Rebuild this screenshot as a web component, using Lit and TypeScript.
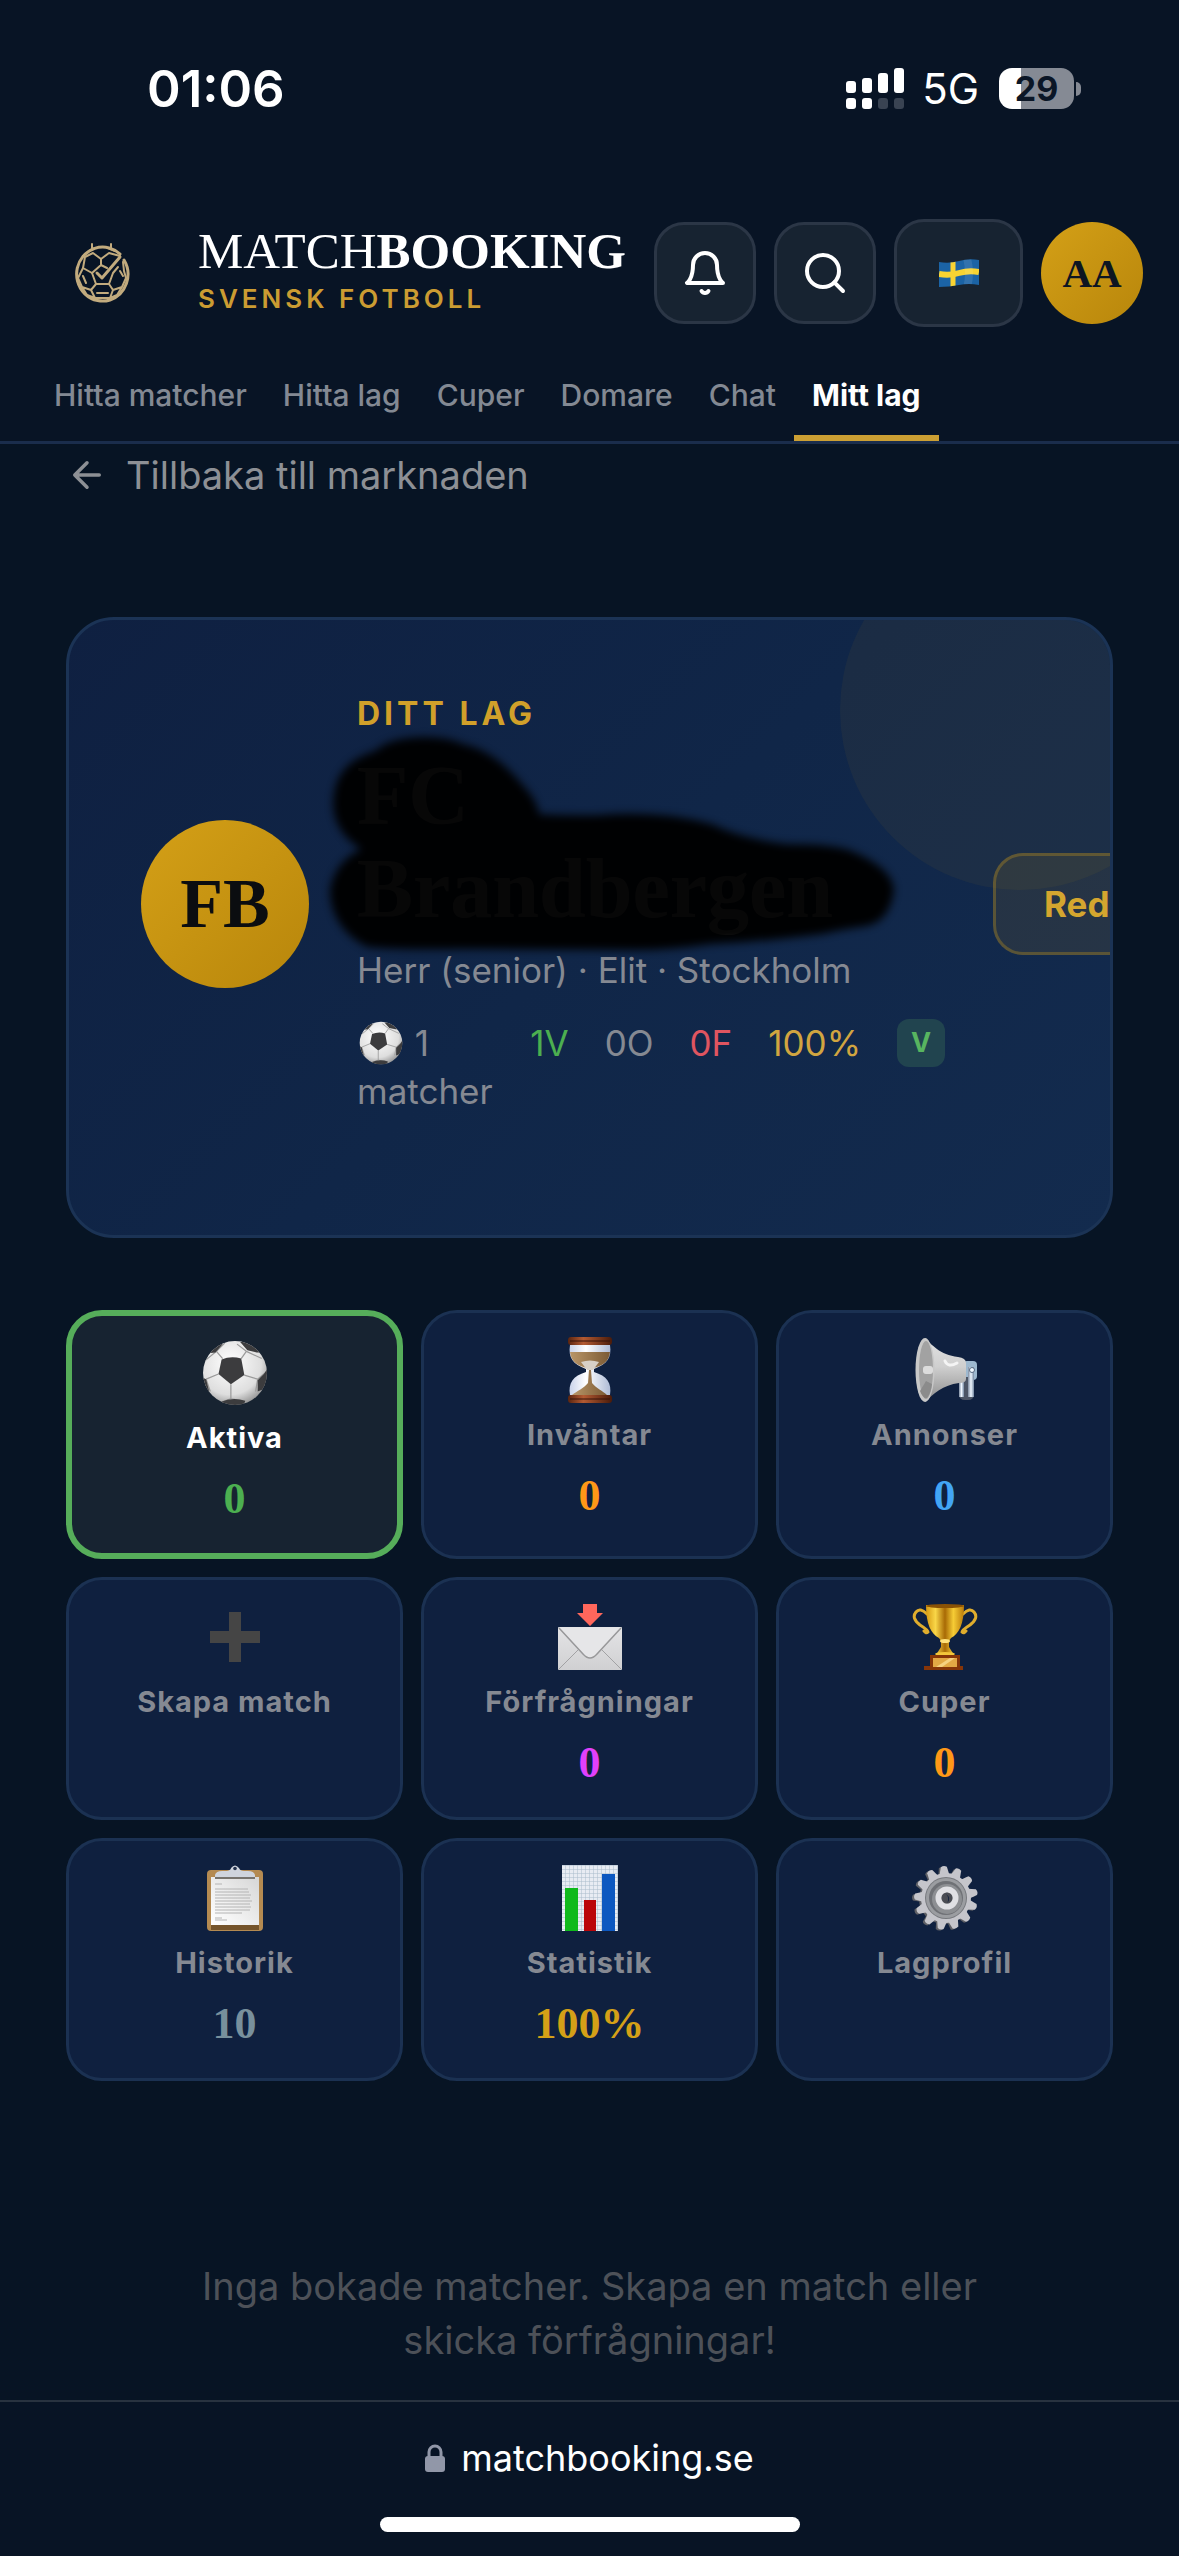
import {css, html, LitElement, nothing, svg} from 'lit';
import type {TemplateResult} from 'lit';
import {customElement, property, state} from 'lit/decorators.js';
import {classMap} from 'lit/directives/class-map.js';
import {styleMap} from 'lit/directives/style-map.js';

const ball = html`
<svg class="pic" viewBox="0 0 64 64" aria-hidden="true">
	<defs>
		<radialGradient id="leather" cx=".42" cy=".35" r=".7">
			<stop offset="0" stop-color="#fff"/>
			<stop offset=".7" stop-color="#dedede"/>
			<stop offset="1" stop-color="#8e8e8e"/>
		</radialGradient>
		<clipPath id="sphere"><circle cx="32" cy="32" r="31"/></clipPath>
	</defs>
	<circle cx="32" cy="32" r="31" fill="url(#leather)"/>
	<g clip-path="url(#sphere)">
		<g stroke="#9a9a9a" stroke-width="1.2" fill="none">
			<path d="M20 18 14 11M38 18 43 11M41 34 54 38M28 43V57M16 33 4 38M14 11 3 20M14 11 22 3M43 11 34 4M43 11 58 18M54 38 61 32M54 38 52 50M28 57 19 60M28 57 40 59M4 38 8 50"/>
		</g>
		<g fill="#3c3c3e">
			<path d="M19 19Q28 15 38 18L41 34 28 43 16 33Z"/>
			<path d="M37 2 44 10 53 12 62 12 50 0ZM4 13 13 12 20 4 12 0ZM64 27 60 33 54 39 54 50 64 46ZM18 60Q30 55 42 59L40 64H22ZM0 36 4 38 7 50 0 52Z"/>
		</g>
	</g>
</svg>`;

const hourglass = html`
<svg class="pic" viewBox="0 0 66 66" aria-hidden="true">
	<defs>
		<linearGradient id="wood"><stop offset="0" stop-color="#5a240f"/><stop offset=".35" stop-color="#b35a32"/><stop offset="1" stop-color="#4a1b0a"/></linearGradient>
		<linearGradient id="glass"><stop offset="0" stop-color="#c9d3ea"/><stop offset=".4" stop-color="#fff"/><stop offset="1" stop-color="#aebbd6"/></linearGradient>
		<linearGradient id="sand"><stop offset="0" stop-color="#b99668"/><stop offset="1" stop-color="#7b5a34"/></linearGradient>
	</defs>
	<path d="M13 8H53C55 21 50 27 37 32V35C50 39 55 46 53 58H13C11 46 16 39 29 35V32C16 27 11 21 13 8Z" fill="url(#glass)"/>
	<path d="M13 15H53C52 25 45 29 36 31H30C21 29 14 25 13 15Z" fill="url(#sand)"/>
	<path d="M24 25Q33 22 42 25L36 33H30Z" fill="#d8d0c6"/>
	<path d="M32 33H34L35 46C39 51 46 54 50 58H15C20 54 27 51 31 46Z" fill="url(#sand)"/>
	<rect x="11" y="0" width="44" height="8" rx="3" fill="url(#wood)"/>
	<rect x="11" y="58" width="44" height="8" rx="3" fill="url(#wood)"/>
	<path d="M13 4H53M13 62H53" stroke="#35130a"/>
</svg>`;

const megaphone = html`
<svg class="pic" viewBox="0 0 66 66" aria-hidden="true">
	<defs>
		<linearGradient id="horn" x2="0" y2="1"><stop offset="0" stop-color="#e2e2e2"/><stop offset=".45" stop-color="#cfcfcf"/><stop offset="1" stop-color="#8d8d8d"/></linearGradient>
		<linearGradient id="steel"><stop offset="0" stop-color="#7d8ba0"/><stop offset=".5" stop-color="#eef6ff"/><stop offset="1" stop-color="#7286a0"/></linearGradient>
	</defs>
	<rect x="51" y="24" width="14" height="19" rx="4" fill="#9db8cf"/>
	<path d="M47 40V57Q47 63 53 63H56Q62 63 62 57V40Z" fill="#4c5566"/>
	<rect x="47" y="38" width="5" height="22" fill="url(#steel)"/>
	<rect x="56" y="30" width="6" height="30" fill="url(#steel)"/>
	<path d="M13 1C19 7 28 18 46 20Q54 21 54 26V42Q54 46 47 46C31 48 21 57 13 65Z" fill="url(#horn)"/>
	<ellipse cx="13" cy="33" rx="9.500" ry="32" fill="#c8c8c8"/>
	<ellipse cx="14" cy="33" rx="7" ry="29" fill="#a2a2a2"/>
	<path d="M14 44 8 54Q11 62 15 61Q19 56 20 47Z" fill="#8b8b8b"/>
	<rect x="11" y="29" width="10" height="8" rx="3" fill="#dcdcdc"/>
	<path d="M33 24Q36 31 45 26" stroke="#f4f4f4" stroke-width="3" fill="none" stroke-linecap="round"/>
	<circle cx="60" cy="33" r="2.500" fill="#f0f8ff" stroke="#53677f"/>
</svg>`;

const plus = html`
<svg class="pic" viewBox="0 0 66 66" aria-hidden="true">
	<path d="M27 8H39V27H58V39H39V58H27V39H8V27H27Z" fill="#454545"/>
</svg>`;

const inbox = html`
<svg class="pic" viewBox="0 0 66 66" aria-hidden="true">
	<defs><linearGradient id="paper" x2="0" y2="1"><stop offset="0" stop-color="#e4e4e6"/><stop offset="1" stop-color="#d0d0d2"/></linearGradient></defs>
	<rect x="1" y="23" width="64" height="43" rx="1" fill="url(#paper)"/>
	<path d="M2 65 22 45M64 65 44 45" stroke="#a2a2a4" fill="none"/>
	<path d="M2 24 26 50Q33 58 40 50L64 24" stroke="#98989a" stroke-width="1.500" fill="#e6e6e8"/>
	<path d="M26 0H40V9H46L33 22 20 9H26Z" fill="#ff675c"/>
</svg>`;

const trophy = html`
<svg class="pic" viewBox="0 0 66 66" aria-hidden="true">
	<defs><linearGradient id="cup"><stop offset="0" stop-color="#d79a12"/><stop offset=".25" stop-color="#f9d648"/><stop offset=".5" stop-color="#a86a05"/><stop offset=".72" stop-color="#f6cc35"/><stop offset="1" stop-color="#b97a0a"/></linearGradient></defs>
	<g fill="none" stroke="#e0ad2d" stroke-width="3" stroke-linecap="round">
		<path d="M15 10Q8 3 4 8Q-1 14 8 21Q16 26 16 28Q14 30 12 27"/>
		<path d="M51 10Q58 3 62 8Q67 14 58 21Q50 26 50 28Q52 30 54 27"/>
	</g>
	<path d="M14 1H52C52 20 47 30 39 34L37 37V43L42 51H24L29 43V37L27 34C19 30 14 20 14 1Z" fill="url(#cup)"/>
	<ellipse cx="33" cy="2" rx="19" ry="2" fill="#8a5205"/>
	<ellipse cx="33" cy="37" rx="5" ry="2" fill="#ffe27a"/>
	<ellipse cx="33" cy="50" rx="10" ry="2" fill="#f3c63a"/>
	<path d="M18 51H48V62H51V66H12V62H18Z" fill="#863508"/>
	<rect x="21" y="54" width="24" height="9" fill="#e3a844"/>
	<path d="M24 63 38 54H43L30 63Z" fill="#f6d180"/>
</svg>`;

const clipboard = html`
<svg class="pic" viewBox="0 0 66 66" aria-hidden="true">
	<defs><linearGradient id="sheet" x1="1" x2="0" y2="1"><stop offset="0" stop-color="#d6d6d6"/><stop offset=".6" stop-color="#f0f0f0"/><stop offset="1" stop-color="#fff"/></linearGradient></defs>
	<rect x="5" y="5" width="56" height="61" rx="4" fill="#b48a51"/>
	<rect x="9" y="60" width="48" height="5" fill="#75542b"/>
	<rect x="9" y="12" width="48" height="48" fill="url(#sheet)"/>
	<path d="M13 14V10Q14 6 20 6H25Q29 5 29 3Q33-2 37 3Q38 6 42 6H46Q52 6 53 10V14Z" fill="#cfd4dd"/>
	<path d="M13 12H53V14H13Z" fill="#77746f"/>
	<circle cx="33" cy="3.500" r="1.800" fill="#22304c"/>
	<path d="M13 19H20M13 24H46M13 27H47M13 30H49M13 33H48M13 36H50M13 39H48M13 42H49M13 45H48M13 48H40M13 53H20M13 55H25" stroke="#b4b4b4"/>
</svg>`;

const chart = html`
<svg class="pic" viewBox="0 0 66 66" aria-hidden="true">
	<defs>
		<pattern id="grid" width="4" height="4" patternUnits="userSpaceOnUse"><path d="M0 0H4M0 0V4" stroke="#a9bccc"/></pattern>
	</defs>
	<rect x="5" width="56" height="66" fill="#e8ecf3"/>
	<rect x="5" width="56" height="66" fill="url(#grid)"/>
	<rect x="8" y="23" width="13" height="43" fill="#0fb91b"/>
	<rect x="27" y="35" width="12" height="31" fill="#bb0509"/>
	<rect x="45" y="9" width="13" height="57" fill="#0d58c0"/>
</svg>`;

const teeth = Array.from({length: 13}, (_, i) => i * 360 / 13);

const gear = html`
<svg class="pic" viewBox="0 0 66 66" aria-hidden="true">
	<g fill="#5f6066" transform="translate(-2 1)">
		<circle cx="34" cy="33" r="25"/>
		${teeth.map(a => svg`<path d="M30 10 31 2Q34 0 37 2L38 10Z" transform="rotate(${a - 4} 34 33)"/>`)}
	</g>
	<g fill="#c5c5cb">
		<circle cx="34" cy="33" r="25"/>
		${teeth.map(a => svg`<path d="M29 10 31 2Q34 0 37 2L39 10Z" transform="rotate(${a - 4} 34 33)"/>`)}
	</g>
	<circle cx="34" cy="33" r="21" fill="#77797e"/>
	<circle cx="34" cy="33" r="20" fill="#9b9da1"/>
	<circle cx="34" cy="33" r="17" fill="#6f7176"/>
	<circle cx="35" cy="34" r="15" fill="#8d8f93"/>
	<circle cx="35" cy="33" r="8.500" fill="none" stroke="#e0e0e4" stroke-width="6"/>
	<circle cx="35" cy="33" r="5.500" fill="#4a4c53"/>
	<path d="M34 29Q40 33 35 38Q38 33 34 29" fill="#13213c"/>
</svg>`;

const flag = html`
<svg class="flag" viewBox="0 0 40 30" aria-hidden="true">
	<defs><clipPath id="wave"><path d="M0 4Q10 6 20 3T40 2V27Q30 25 20 27T0 29Z"/></clipPath></defs>
	<g clip-path="url(#wave)">
		<rect width="40" height="30" fill="#1b63a5"/>
		<path d="M0 16Q10 18 20 15T40 14" stroke="#f8d332" stroke-width="6" fill="none"/>
		<path d="M14 0V30" stroke="#f8d332" stroke-width="5"/>
		<path d="M24 0Q28 15 24 30H32Q36 15 32 0Z" fill="#fff" opacity=".1"/>
	</g>
</svg>`;

const logo = html`
<svg class="logo" viewBox="0 0 56 60" role="img" aria-label="Matchbooking">
	<g fill="none" stroke="#c2ab7e" stroke-width="2" stroke-linejoin="round" stroke-linecap="round">
		<path d="M18 1V6M37 1V6"/>
		<path d="M50 17A26 27 0 0 1 36 57M46 11A26 27 0 1 0 36 57" stroke-width="3"/>
		<path d="M23 30 28 35 46 14" stroke-width="3"/>
		<path d="M27 22V16L19 10 11 14 9 25 18 30 27 22 33 25M27 16 35 10 46 13"/>
		<path d="M18 30 22 41H35L39 30 44 24M9 25 4 35 8 44 17 47 22 41M49 19 50 28 52 35 48 44 39 47 35 41M17 47 21 55H36L39 47M8 44 13 52 21 55M48 44 43 52 36 55"/>
		<path d="M23 50H34M9 33 12 40M46 28 49 33M15 8 21 5M34 5 41 8"/>
	</g>
</svg>`;

const bell = html`
<svg class="glyph" viewBox="0 0 24 24" aria-hidden="true">
	<path d="M18 8A6 6 0 0 0 6 8c0 7-3 9-3 9h18s-3-2-3-9"/>
	<path d="M13.730 21a2 2 0 0 1-3.460 0"/>
</svg>`;

const search = html`
<svg class="glyph" viewBox="0 0 24 24" aria-hidden="true">
	<circle cx="11" cy="11" r="8"/>
	<path d="M21 21 16.650 16.650"/>
</svg>`;

const tabs = ['Hitta matcher', 'Hitta lag', 'Cuper', 'Domare', 'Chat', 'Mitt lag'];

interface Tile {
	icon: TemplateResult;
	label: string;
	value?: string;
	color?: string;
}

const tiles: Tile[] = [
	{icon: ball, label: 'Aktiva', value: '0', color: '#4caf50'},
	{icon: hourglass, label: 'Inväntar', value: '0', color: '#ff9817'},
	{icon: megaphone, label: 'Annonser', value: '0', color: '#42a5f5'},
	{icon: plus, label: 'Skapa match'},
	{icon: inbox, label: 'Förfrågningar', value: '0', color: '#e040fb'},
	{icon: trophy, label: 'Cuper', value: '0', color: '#ff9817'},
	{icon: clipboard, label: 'Historik', value: '10', color: '#78909c'},
	{icon: chart, label: 'Statistik', value: '100%', color: '#d4a017'},
	{icon: gear, label: 'Lagprofil'},
];

@customElement('status-bar')
export class StatusBar extends LitElement {
	protected render() {
		return html`
		<time>01:06</time>
		<div class="right">
			<svg class="signal" viewBox="0 0 58 41" aria-hidden="true">
				<g fill="#fff">
					<rect y="13" width="10" height="12" rx="3"/>
					<rect x="16" y="10" width="10" height="15" rx="3"/>
					<rect x="32" y="5" width="10" height="20" rx="3"/>
					<rect x="48" width="10" height="25" rx="3"/>
					<rect y="30" width="10" height="11" rx="3"/>
					<rect x="16" y="30" width="10" height="11" rx="3"/>
				</g>
				<g fill="#394352">
					<rect x="32" y="30" width="10" height="11" rx="3"/>
					<rect x="48" y="30" width="10" height="11" rx="3"/>
				</g>
			</svg>
			<span class="net">5G</span>
			<span class="battery"><span class="level">29</span><span class="nub"></span></span>
		</div>
		`;
	}

	static styles = css`
		:host {
			display: flex;
			align-items: center;
			justify-content: space-between;
			height: 177px;
			padding: 0 98px 0 147px;
			color: #fff;
		}
		time {
			font-size: 51px;
			font-weight: 600;
			line-height: 56px;
		}
		.right, .battery {
			display: flex;
			align-items: center;
		}
		.signal {
			width: 58px;
			height: 41px;
		}
		.net {
			margin: 0 20px 0 18px;
			font-size: 42px;
			line-height: 56px;
		}
		.battery {
			gap: 2px;
		}
		.level {
			width: 75px;
			border-radius: 13px;
			background: linear-gradient(90deg, #fff 22px, #858a94 22px);
			color: #0b1626;
			font-size: 34px;
			font-weight: 700;
			line-height: 41px;
			text-align: center;
		}
		.nub {
			width: 5px;
			height: 14px;
			border-radius: 0 7px 7px 0;
			background: #858a94;
		}
	`;
}

@customElement('team-card')
export class TeamCard extends LitElement {
	protected render() {
		return html`
		<div class="row">
			<div class="badge">FB</div>
			<div class="info">
				<div class="label">Ditt lag</div>
				<div class="name">
					<h1>FC Brandbergen</h1>
					<svg class="ink" viewBox="328 735 568 216" aria-hidden="true">
						<path stroke="#000" stroke-width="8" d="M338 794C342 766 366 758 378 754C394 738 440 738 462 748C490 754 508 774 520 788Q534 802 536 818Q570 820 600 819Q660 814 711 828Q740 842 785 848Q830 848 848 854Q888 870 890 890Q886 918 866 922Q838 926 822 930Q760 938 711 940Q670 946 637 946L461 945Q400 946 368 943C342 930 334 908 334 890C338 868 352 856 370 850C344 836 334 818 338 794Z"/>
					</svg>
				</div>
				<div class="meta">Herr (senior) · Elit · Stockholm</div>
				<div class="stats">
					<span class="played">${ball} 1 matcher</span>
					<span class="won">1V</span>
					<span>0O</span>
					<span class="lost">0F</span>
					<span class="rate">100%</span>
					<span class="form">V</span>
				</div>
			</div>
			<button>Redigera</button>
		</div>
		`;
	}

	static styles = css`
		:host {
			display: block;
			position: relative;
			overflow: hidden;
			padding: 72px 72px 120px;
			border: 3px solid #1b3355;
			border-radius: 48px;
			background: linear-gradient(135deg, #0f2041, #102648 50%, #132b4e);
		}
		:host::before {
			content: '';
			position: absolute;
			top: -90px;
			right: -90px;
			width: 360px;
			height: 360px;
			border-radius: 50%;
			background: rgba(212, 160, 23, .06);
		}
		.row {
			position: relative;
			display: flex;
			align-items: center;
			gap: 48px;
		}
		.badge {
			flex: none;
			width: 168px;
			border-radius: 50%;
			background: linear-gradient(135deg, #d4a017, #b8860b);
			color: #0b0d10;
			font: 700 70px/168px 'Liberation Serif', serif;
			text-align: center;
		}
		.info {
			flex: none;
			width: 588px;
		}
		.label {
			color: #d1a02a;
			font-size: 32px;
			font-weight: 700;
			line-height: 43px;
			letter-spacing: 4px;
			text-transform: uppercase;
		}
		.name {
			position: relative;
			margin-top: 14px;
		}
		h1 {
			width: min-content;
			margin: 0;
			color: #fff;
			font: 700 84px/93px 'Liberation Serif', serif;
		}
		.ink {
			position: absolute;
			left: -29px;
			top: -14px;
			width: 568px;
			height: 216px;
			overflow: visible;
			opacity: .97;
			filter: blur(4px);
		}
		.meta {
			margin-top: 8px;
			color: #858992;
			font-size: 35px;
			line-height: 54px;
			white-space: nowrap;
		}
		.stats {
			display: flex;
			align-items: flex-start;
			gap: 36px;
			margin-top: 22px;
			color: #858992;
			font-size: 35px;
			line-height: 48px;
		}
		.played {
			flex: 1;
		}
		.pic {
			width: 44px;
			height: 44px;
			margin: 0 2px;
			vertical-align: -9px;
		}
		.won {
			color: #4caf50;
		}
		.lost {
			color: #e05560;
		}
		.rate {
			color: #d1a540;
		}
		.form {
			flex: none;
			width: 48px;
			border-radius: 12px;
			background: #21444f;
			color: #58b560;
			font-size: 27px;
			font-weight: 700;
			text-align: center;
		}
		button {
			flex: none;
			height: 102px;
			padding: 0 48px;
			border: 3px solid rgba(212, 160, 23, .3);
			border-radius: 30px;
			background: rgba(212, 160, 23, .1);
			color: #d4a62f;
			font: inherit;
			font-size: 35px;
			font-weight: 700;
		}
	`;
}

@customElement('menu-tile')
export class MenuTile extends LitElement {
	@property({attribute: false})
	tile!: Tile;

	@property({type: Boolean})
	active = false;

	protected render() {
		const {icon, label, value, color} = this.tile;
		return html`
		<button class=${classMap({active: this.active})} aria-pressed=${this.active}>
			${icon}
			<span class="label">${label}</span>
			${value ? html`<span class="value" style=${styleMap({color})}>${value}</span>` : nothing}
		</button>
		`;
	}

	static styles = css`
		:host {
			display: grid;
		}
		button {
			display: flex;
			flex-direction: column;
			align-items: center;
			justify-content: flex-start;
			gap: 6px;
			padding: 24px 12px 26px;
			border: 3px solid #1b3152;
			border-radius: 36px;
			background: #0f203f;
			color: #858992;
			font: inherit;
		}
		.active {
			border: 6px solid #56ad5a;
			background: #172331;
			color: #fff;
		}
		.pic {
			width: 66px;
			height: 66px;
		}
		.label {
			font-size: 29px;
			font-weight: 700;
			line-height: 52px;
			letter-spacing: 1px;
		}
		.value {
			font: 700 44px/57px 'Liberation Serif', serif;
		}
	`;
}

@customElement('app-root')
export class AppRoot extends LitElement {
	@state()
	private tab = 'Mitt lag';

	@state()
	private selected = 'Aktiva';

	protected render() {
		return html`
		<header>
			<status-bar></status-bar>
			<div class="top">
				${logo}
				<div class="brand">
					<div class="title">MATCH<b>BOOKING</b></div>
					<div class="tagline">Svensk fotboll</div>
				</div>
				<button class="tool" aria-label="Notiser">${bell}</button>
				<button class="tool" aria-label="Sök">${search}</button>
				<button class="tool lang" aria-label="Språk">${flag}</button>
				<button class="avatar">AA</button>
			</div>
			<nav>
				${tabs.map(name => html`
					<a href="#" class=${classMap({current: name === this.tab})} @click=${(e: Event) => this.onTab(e, name)}>${name}</a>
				`)}
			</nav>
		</header>
		<main>
			<a class="back" href="#">
				<svg viewBox="0 0 24 24" aria-hidden="true"><path d="M19 12H5M12 19 5 12 12 5"/></svg>
				Tillbaka till marknaden
			</a>
			<team-card></team-card>
			<div class="tiles">
				${tiles.map(tile => html`
					<menu-tile .tile=${tile} ?active=${tile.label === this.selected} @click=${() => this.selected = tile.label}></menu-tile>
				`)}
			</div>
			<p class="empty">Inga bokade matcher. Skapa en match eller skicka förfrågningar!</p>
		</main>
		<footer>
			<div class="url">
				<svg viewBox="0 0 20 28" aria-hidden="true">
					<path d="M4 13V8A6 6 0 0 1 16 8V13" fill="none" stroke="#9197a8" stroke-width="3"/>
					<rect y="12" width="20" height="16" rx="3" fill="#9197a8"/>
				</svg>
				matchbooking.se
			</div>
			<div class="home"></div>
		</footer>
		`;
	}

	private onTab(e: Event, name: string) {
		e.preventDefault();
		this.tab = name;
	}

	static styles = css`
		:host {
			display: flex;
			flex-direction: column;
			min-height: 100vh;
			background: #071424;
			color: #fff;
			font-family: Inter, 'Liberation Sans', sans-serif;
		}
		header {
			border-bottom: 3px solid #1a2d4c;
			background: #081425;
		}
		a {
			text-decoration: none;
		}
		.top {
			display: flex;
			align-items: center;
			gap: 18px;
			padding: 42px 36px 24px;
		}
		.logo {
			width: 56px;
			height: 60px;
			margin: 0 30px 0 38px;
		}
		.brand {
			flex: 1;
			padding-left: 20px;
			white-space: nowrap;
		}
		.title {
			font: 51px/52px 'Liberation Serif', serif;
		}
		.tagline {
			color: #cb9c32;
			font-size: 26px;
			font-weight: 600;
			line-height: 44px;
			letter-spacing: 4px;
			text-transform: uppercase;
		}
		.tool {
			display: grid;
			place-items: center;
			width: 102px;
			height: 102px;
			padding: 0;
			border: 3px solid #2b3646;
			border-radius: 30px;
			background: #172331;
		}
		.lang {
			width: 129px;
			height: 108px;
		}
		.glyph {
			width: 48px;
			height: 48px;
			fill: none;
			stroke: #fff;
			stroke-width: 2;
			stroke-linecap: round;
			stroke-linejoin: round;
		}
		.flag {
			width: 40px;
			height: 30px;
		}
		.avatar {
			width: 102px;
			height: 102px;
			padding: 0;
			border: 0;
			border-radius: 50%;
			background: linear-gradient(135deg, #d4a017, #b8860b);
			color: #0d1522;
			font: 700 41px 'Liberation Serif', serif;
		}
		nav {
			display: flex;
			padding: 0 36px;
		}
		nav a {
			padding: 20px 18px 16px;
			border-bottom: 6px solid transparent;
			color: #838993;
			font-size: 30px;
			font-weight: 500;
			line-height: 48px;
			white-space: nowrap;
		}
		nav .current {
			border-color: #cb9f33;
			color: #fff;
			font-weight: 700;
		}
		main {
			flex: 1;
			padding: 2px 66px 0;
		}
		.back {
			display: flex;
			align-items: center;
			gap: 18px;
			color: #8d9095;
			font-size: 38px;
			line-height: 58px;
		}
		.back svg {
			width: 42px;
			height: 42px;
			fill: none;
			stroke: currentColor;
			stroke-width: 2;
			stroke-linecap: round;
			stroke-linejoin: round;
		}
		team-card {
			margin: 113px 0 72px;
		}
		.tiles {
			display: grid;
			grid-template-columns: repeat(3, 1fr);
			gap: 18px;
		}
		.empty {
			margin: 178px 0 0;
			padding: 0 96px;
			color: #4d5158;
			font-size: 38px;
			line-height: 54px;
			text-align: center;
		}
		footer {
			padding: 30px 0 24px;
			border-top: 2px solid #28323f;
			background: #081425;
		}
		.url {
			display: flex;
			align-items: center;
			justify-content: center;
			gap: 16px;
			font-size: 36px;
			line-height: 52px;
		}
		.url svg {
			width: 20px;
			height: 28px;
		}
		.home {
			width: 420px;
			height: 15px;
			margin: 33px auto 0;
			border-radius: 8px;
			background: #fff;
		}
	`;
}
